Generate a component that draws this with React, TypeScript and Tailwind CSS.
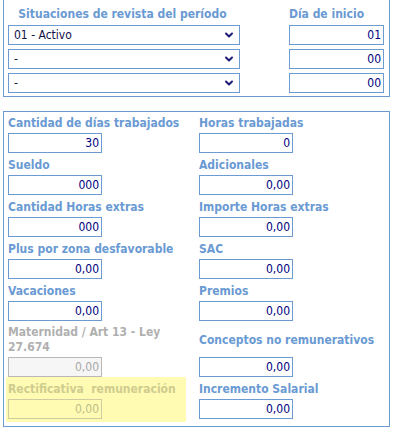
import { Fragment } from 'react';
import { ChevronDown } from 'lucide-react';

const font = { fontFamily: '"DejaVu Sans Condensed", "DejaVu Sans", sans-serif' };

const situaciones = [
  { label: '01 - Activo', dia: '01' },
  { label: '-', dia: '00' },
  { label: '-', dia: '00' },
];

type Field = {
  label: string;
  value: string;
  tall?: boolean;
  kind?: 'disabled' | 'highlight';
};

const rows: [Field, Field][] = [
  [{ label: 'Cantidad de días trabajados', value: '30' }, { label: 'Horas trabajadas', value: '0' }],
  [{ label: 'Sueldo', value: '000' }, { label: 'Adicionales', value: '0,00' }],
  [{ label: 'Cantidad Horas extras', value: '000' }, { label: 'Importe Horas extras', value: '0,00' }],
  [{ label: 'Plus por zona desfavorable', value: '0,00' }, { label: 'SAC', value: '0,00' }],
  [{ label: 'Vacaciones', value: '0,00' }, { label: 'Premios', value: '0,00' }],
  [
    { label: 'Maternidad / Art 13 - Ley 27.674', value: '0,00', tall: true, kind: 'disabled' },
    { label: 'Conceptos no remunerativos', value: '0,00', tall: true },
  ],
  [
    { label: 'Rectificativa  remuneración', value: '0,00', kind: 'highlight' },
    { label: 'Incremento Salarial', value: '0,00' },
  ],
];

const Cell = ({ f, first, last }: { f: Field; first: boolean; last: boolean }) => {
  const labelColor =
    f.kind === 'disabled' ? 'text-[#b0b0b0]' : f.kind === 'highlight' ? 'text-[#cfcc8f]' : 'text-[#6a9ad3]';
  const inputCls =
    f.kind === 'disabled'
      ? 'border-[#b8b8b8] bg-[#f6f6f6] text-[#a8a8a8]'
      : f.kind === 'highlight'
        ? 'border-[#cfcc9f] bg-transparent text-[#c0bd8a]'
        : 'border-[#6c9bd2] bg-white text-[#000080]';
  return (
    <div
      className={`pl-[2px] ${first ? 'pt-[3px]' : 'pt-[4px]'} ${last ? 'pb-[3px]' : 'pb-0'} ${
        f.kind === 'highlight' ? 'bg-[#fffbb3]' : ''
      }`}
    >
      {f.tall ? (
        <div className={`h-[30px] flex items-center font-bold text-[12px] leading-[15px] ${labelColor}`}>
          {f.label}
        </div>
      ) : (
        <div className={`h-[16px] font-bold text-[12px] leading-[16px] whitespace-pre ${labelColor}`}>{f.label}</div>
      )}
      <div
        className={`mt-[2px] w-[94px] h-[20px] border text-right pr-[2px] text-[12px] leading-[18px] ${inputCls}`}
      >
        {f.value}
      </div>
    </div>
  );
};

export default function App() {
  return (
    <div className="w-[394px] h-[431px] bg-white overflow-hidden" style={font}>
      {/* Situaciones de revista */}
      <div className="ml-[3px] w-[387px] border-x border-b border-[#6c9bd2] pb-[3px]">
        <div className="flex h-[25px] pt-[6px] leading-[16px] text-[12px] font-bold text-[#6a9ad3]">
          <div className="w-[237px] text-center">Situaciones de revista del período</div>
          <div className="w-[145px] pl-[26px] text-center">Día de inicio</div>
        </div>
        <div className="flex flex-col gap-[4px]">
          {situaciones.map((s, i) => (
            <div key={i} className="flex items-center">
              <div className="ml-[4px] w-[232px] h-[20px] border border-[#6c9bd2] flex items-center justify-between pl-[5px] pr-[4px] text-[12px] text-[#10104a]">
                <span>{s.label}</span>
                <ChevronDown size={12} strokeWidth={4} className="text-[#1b1b7a]" />
              </div>
              <div className="ml-[49px] w-[95px] h-[20px] border border-[#6c9bd2] text-right pr-[2px] text-[12px] leading-[18px] text-[#000080]">
                {s.dia}
              </div>
            </div>
          ))}
        </div>
      </div>

      {/* Remuneraciones */}
      <div className="ml-[3px] mt-[14px] w-[387px] border border-[#6c9bd2] pl-[2px] pb-[4px]">
        <div className="grid grid-cols-[180px_1fr] gap-x-[11px]">
          {rows.map((r, i) => (
            <Fragment key={i}>
              <Cell f={r[0]} first={i === 0} last={i === rows.length - 1} />
              <Cell f={r[1]} first={i === 0} last={i === rows.length - 1} />
            </Fragment>
          ))}
        </div>
      </div>
    </div>
  );
}
